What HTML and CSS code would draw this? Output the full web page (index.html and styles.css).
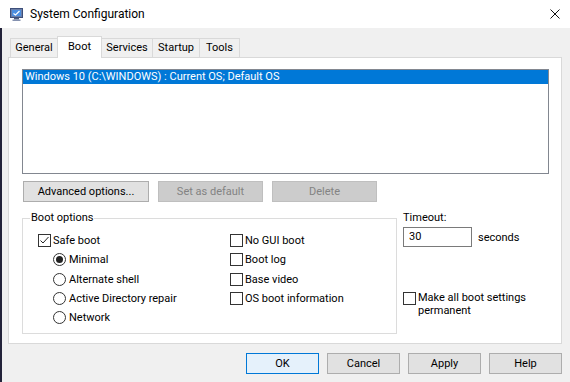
FILE: index.html
```html
<!DOCTYPE html>
<html lang="en">
<head>
    <meta charset="UTF-8">
    <title>System Configuration</title>
    <link rel="stylesheet" href="styles.css">
</head>
<body>
<div class="window">

    <!-- Title bar -->
    <header class="titlebar">
        <svg class="app-icon" width="13" height="13" viewBox="0 0 13 13">
            <rect x="0.5" y="0.5" width="12" height="9" fill="#6b7fa8" stroke="#3d4f7a"/>
            <rect x="2" y="2" width="9" height="6" fill="#4a8ee0"/>
            <path d="M3.5 5.5 L5.5 7 L9.5 3" stroke="#fff" stroke-width="1.2" fill="none"/>
            <rect x="4" y="10" width="5" height="1.5" fill="#4d5d80"/>
            <rect x="2.5" y="11.5" width="8" height="1.5" fill="#8592b0"/>
        </svg>
        <span class="title">System Configuration</span>
        <svg class="close" width="10" height="10" viewBox="0 0 10 10">
            <path d="M0.5 0.5 L9.5 9.5 M9.5 0.5 L0.5 9.5" stroke="#111" stroke-width="1"/>
        </svg>
    </header>

    <div class="content">
        <!-- Tabs -->
        <div class="tabs">
            <div class="tab tab-general">General</div>
            <div class="tab tab-boot active">Boot</div>
            <div class="tab tab-services">Services</div>
            <div class="tab tab-startup">Startup</div>
            <div class="tab tab-tools">Tools</div>
        </div>

        <div class="panel">
            <!-- OS list -->
            <div class="boot-list">
                <div class="boot-item selected">Windows 10 (C:\WINDOWS) : Current OS; Default OS</div>
            </div>

            <div class="list-buttons">
                <button class="btn btn-advanced">Advanced options...</button>
                <button class="btn btn-mid" disabled>Set as default</button>
                <button class="btn btn-mid" disabled>Delete</button>
            </div>

            <div class="options-row">
                <fieldset class="group">
                    <legend>Boot options</legend>
                    <div class="group-cols">
                        <div class="col col-left">
                            <label class="opt"><span class="check checked"><svg width="11" height="11" viewBox="0 0 11 11"><path d="M1.5 5.5 L4 8 L9.5 2" stroke="#222" stroke-width="1" fill="none"/></svg></span>Safe boot</label>
                            <label class="opt sub"><span class="radio on"></span>Minimal</label>
                            <label class="opt sub"><span class="radio"></span>Alternate shell</label>
                            <label class="opt sub"><span class="radio"></span>Active Directory repair</label>
                            <label class="opt sub"><span class="radio"></span>Network</label>
                        </div>
                        <div class="col col-right">
                            <label class="opt"><span class="check"></span>No GUI boot</label>
                            <label class="opt"><span class="check"></span>Boot log</label>
                            <label class="opt"><span class="check"></span>Base video</label>
                            <label class="opt"><span class="check"></span>OS boot information</label>
                        </div>
                    </div>
                </fieldset>

                <div class="side">
                    <div class="side-label">Timeout:</div>
                    <div class="timeout">
                        <span class="field">30</span>
                        <span class="unit">seconds</span>
                    </div>
                    <label class="opt permanent"><span class="check"></span><span class="permanent-text">Make all boot settings<br>permanent</span></label>
                </div>
            </div>
        </div>

        <!-- Dialog buttons -->
        <div class="dialog-buttons">
            <button class="btn btn-dialog default">OK</button>
            <button class="btn btn-dialog">Cancel</button>
            <button class="btn btn-dialog">Apply</button>
            <button class="btn btn-dialog">Help</button>
        </div>
    </div>
</div>
</body>
</html>
```

FILE: styles.css
```css
body {
    margin: 0;
    font-family: Roboto, "Liberation Sans", sans-serif;
    font-size: 11px;
    color: #000;
}
.window {
    width: 570px;
    height: 382px;
    display: flex;
    flex-direction: column;
    overflow: hidden;
}
.titlebar {
    height: 28px;
    background-color: #fff;
    display: flex;
    align-items: center;
    padding-left: 10px;
    padding-right: 10px;
}
.app-icon {
    margin-top: 1px;
}
.title {
    font-size: 12px;
    margin-left: 7px;
    flex: 1;
}
.content {
    flex: 1;
    background-color: #f0f0f0;
    border-left: 2px solid #23233a;
    display: flex;
    flex-direction: column;
}

/* tabs */
.tabs {
    display: flex;
    align-items: flex-end;
    height: 21px;
    margin-top: 8px;
    padding-left: 8px;
}
.tab {
    height: 19px;
    line-height: 18px;
    text-align: center;
    border: 1px solid #d9d9d9;
    border-bottom: none;
    margin-right: -1px;
    background-color: #f0f0f0;
    box-sizing: border-box;
}
.tab.active {
    height: 22px;
    line-height: 19px;
    background-color: #fff;
    margin-bottom: -1px;
    position: relative;
    z-index: 1;
}
.tab-general { width: 48px; }
.tab-boot { width: 45px; }
.tab-services { width: 52px; }
.tab-startup { width: 48px; }
.tab-tools { width: 41px; }

.panel {
    height: 287px;
    box-sizing: border-box;
    margin: 0 8px 0 6px;
    padding: 11px 12px 0 13px;
    background-color: #fff;
    border: 1px solid #d9d9d9;
}
.boot-list {
    height: 105px;
    box-sizing: border-box;
    border: 1px solid #828790;
}
.boot-item {
    height: 14px;
    line-height: 14px;
    padding-left: 2px;
}
.boot-item.selected {
    background-color: #0078d7;
    color: #fff;
}

/* buttons */
.btn {
    font-family: inherit;
    font-size: 11px;
    height: 21px;
    padding: 0;
    background-color: #e1e1e1;
    border: 1px solid #adadad;
    color: #000;
    border-radius: 0;
}
.btn:disabled {
    background-color: #cccccc;
    border-color: #bfbfbf;
    color: #838383;
}
.list-buttons {
    display: flex;
    gap: 9px;
    margin-top: 7px;
    padding-left: 1px;
}
.btn-advanced { width: 126px; }
.btn-mid { width: 105px; }

.options-row {
    display: flex;
    gap: 6px;
    margin-top: 9px;
}
.group {
    width: 375px;
    height: 123px;
    box-sizing: border-box;
    margin: 0;
    padding: 0 0 0 15px;
    border: 1px solid #dcdcdc;
}
.group legend {
    padding: 0 1px;
    margin-left: -8px;
    line-height: 14px;
}
.group-cols {
    display: flex;
    padding-top: 6px;
}
.col {
    display: flex;
    flex-direction: column;
}
.col-left { width: 192px; }

.opt {
    display: flex;
    align-items: center;
    height: 19.3px;
}
.opt.sub {
    padding-left: 15px;
}
.check {
    width: 13px;
    height: 13px;
    box-sizing: border-box;
    border: 1px solid #333;
    background-color: #fff;
    margin-right: 2px;
    display: flex;
    align-items: center;
    justify-content: center;
    flex-shrink: 0;
}
.radio {
    width: 13px;
    height: 13px;
    box-sizing: border-box;
    border: 1px solid #333;
    border-radius: 50%;
    background-color: #fff;
    margin-right: 3px;
    display: flex;
    align-items: center;
    justify-content: center;
}
.radio.on::after {
    content: "";
    width: 7px;
    height: 7px;
    border-radius: 50%;
    background-color: #222;
}

.side {
    display: flex;
    flex-direction: column;
}
.side-label {
    line-height: 14px;
}
.timeout {
    display: flex;
    align-items: center;
    margin-top: 2px;
}
.field {
    width: 69px;
    height: 20px;
    box-sizing: border-box;
    border: 1px solid #7a7a7a;
    background-color: #fff;
    line-height: 18px;
    padding-left: 5px;
}
.unit {
    margin-left: 6px;
}
.permanent {
    margin-top: 45px;
    align-items: flex-start;
    height: auto;
}
.permanent-text {
    line-height: 13px;
    margin-top: -1px;
}

.dialog-buttons {
    display: flex;
    justify-content: flex-end;
    gap: 8px;
    margin-top: 9px;
    padding-right: 8px;
}
.btn-dialog { width: 73px; }
.btn-dialog.default {
    background-color: #e5f1fb;
    border-color: #0078d7;
}
```
